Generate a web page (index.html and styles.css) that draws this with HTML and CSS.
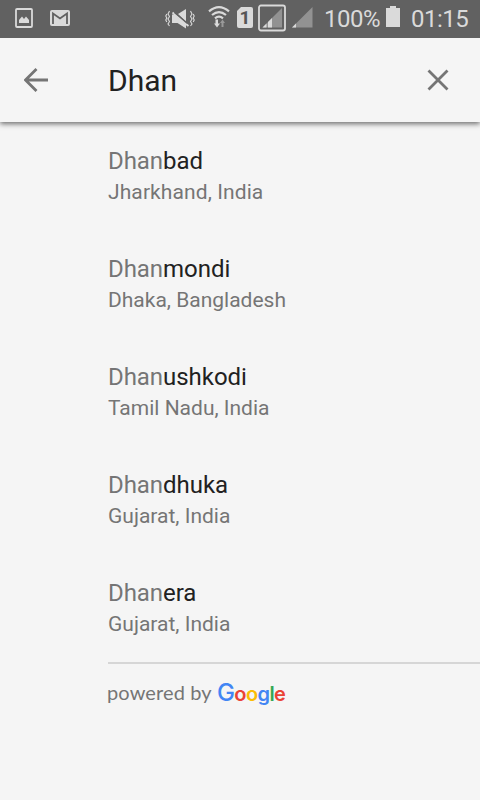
FILE: index.html
```html
<!DOCTYPE html>
<html lang="en">
<head>
<meta charset="utf-8">
<title>Place search</title>
<link rel="stylesheet" href="styles.css">
</head>
<body>
<header class="status">
  <svg class="picture" width="18" height="20" viewBox="0 0 18 20"><rect x="1" y="1" width="16" height="18" rx="1" fill="none" stroke="currentColor" stroke-width="1.800"/><path d="M4 15v-3l3-3.500 2 2.500 2-2.500 3 3.500v3z" fill="currentColor"/></svg>
  <svg class="mail" width="20" height="16" viewBox="0 0 20 16"><rect width="20" height="16" rx="2" fill="currentColor"/><path d="M3 14V3.500l7 5 7-5V14" fill="none" stroke="#616161" stroke-width="1.800"/></svg>
  <svg class="mute" width="30" height="22" viewBox="0 0 30 22"><path d="M4.500 3l-1.500 3 1.500 2.500-1.500 2.500 1.500 2.500-1.500 2.500 1.500 2M1.800 6l-1 2 1 2-1 2 1 2M25.500 3l1.500 3-1.500 2.500 1.500 2.500-1.500 2.500 1.500 2.500-1.500 2M28.200 6l1 2-1 2 1 2-1 2" fill="none" stroke="currentColor" stroke-width="1.100"/><path d="M13 6l8-5v12.500z" fill="currentColor"/><path d="M7 6.500h2.500l11.500 9.500v4.500L12.500 15H7z" fill="currentColor"/><path d="M7.500 4.500l16 13.500" stroke="currentColor" stroke-width="1.800"/><path d="M9.500 4.500l13 11" stroke="#616161" stroke-width="1.300"/></svg>
  <svg class="wifi" width="22" height="24" viewBox="0 0 22 24"><path d="M1 6.300Q11-2.200 21 6.300M4 10Q11 4.200 18 10M7 13.300Q11 10 15 13.300" fill="none" stroke="currentColor" stroke-width="2.200"/><path d="M7.500 14.500h2.500v4H12l-3 4-3-4h1.500z" fill="currentColor"/><path d="M13.500 22v-4H12l2.500-3.500 2.500 3.500h-1.500v4z" fill="#999"/></svg>
  <span class="sim">1</span>
  <svg class="signal" width="28" height="28" viewBox="0 0 28 28"><rect x="1" y="1.500" width="26" height="25" rx="2" fill="none" stroke="currentColor" stroke-width="1.800"/><path d="M4.500 23.500L24 4v19.500z" fill="#929292"/><path d="M4.500 23.500L8.500 19.500v4zM10 23.500v-5.500l4-4v9.500z" fill="currentColor"/></svg>
  <svg class="signal2" width="21" height="21" viewBox="0 0 21 21"><path d="M0 20.500L20.500 0v20.500z" fill="#929292"/><path d="M0 20.500l4-4v4z" fill="currentColor"/></svg>
  <span class="percent">100%</span>
  <svg class="battery" width="14" height="21" viewBox="0 0 14 21"><path d="M4 0h6v2h4v19H0V2h4z" fill="currentColor"/></svg>
  <span class="clock">01:15</span>
</header>
<div class="search">
  <svg class="back" width="24" height="24" viewBox="0 0 24 24"><path d="M24 12H2M12.500 1L1.500 12l11 11" fill="none" stroke="currentColor" stroke-width="2.800"/></svg>
  <span class="query">Dhan</span>
  <svg class="clear" width="22" height="22" viewBox="0 0 22 22"><path d="M1.500 1.500l19 19M20.500 1.500l-19 19" stroke="currentColor" stroke-width="2.800"/></svg>
</div>
<main class="results">
  <div class="place"><div class="name">Dhan<b>bad</b></div><div class="region wide">Jharkhand, India</div></div>
  <div class="place"><div class="name">Dhan<b>mondi</b></div><div class="region">Dhaka, Bangladesh</div></div>
  <div class="place"><div class="name">Dhan<b>ushkodi</b></div><div class="region">Tamil Nadu, India</div></div>
  <div class="place"><div class="name">Dhan<b>dhuka</b></div><div class="region">Gujarat, India</div></div>
  <div class="place"><div class="name">Dhan<b>era</b></div><div class="region">Gujarat, India</div></div>
</main>
<footer class="credit"><span class="powered">powered by</span><span class="google"><i class="blue cap">G</i><i class="red">o</i><i class="yellow">o</i><i class="blue">g</i><i class="green">l</i><i class="red">e</i></span></footer>
</body>
</html>
```
FILE: styles.css
```css
* { box-sizing: border-box; }
body { margin: 0; height: 800px; overflow: hidden; background: #f5f5f5; font-family: Roboto, sans-serif; color: #212121; }
svg { display: block; flex: none; }
.status { height: 38px; display: flex; align-items: flex-start; background: #616161; color: #dadada; white-space: nowrap; }
.picture { margin: 8px 0 0 15px; }
.mail { margin: 10px 0 0 17px; }
.mute { margin: 8px 0 0 95px; }
.wifi { margin: 5px 0 0 13px; }
.sim { width: 16px; height: 21px; margin: 7px 0 0 7px; border-radius: 2px; background: #dadada; color: #555; font-weight: 700; font-size: 19px; line-height: 22px; text-align: center; clip-path: polygon(4px 0, 100% 0, 100% 100%, 0 100%, 0 4px); }
.signal { margin: 4px 0 0 5px; }
.signal2 { margin: 7px 0 0 6px; }
.percent { width: 57px; margin: 5px 0 0 11px; font-size: 24px; line-height: 28px; letter-spacing: -.5px; }
.battery { margin: 6px 0 0 5px; }
.clock { margin: 5px 0 0 11px; font-size: 24px; line-height: 28px; letter-spacing: -.5px; }
.search { height: 84px; display: flex; align-items: center; padding: 0 31px 0 24px; background: #f5f5f5; color: #757575; box-shadow: 0 2px 5px rgba(0,0,0,.55); clip-path: inset(0 0 -10px 0); }
.query { flex: 1; margin: 2px 0 0 60px; font-size: 30px; line-height: 36px; color: #212121; }
.results { margin-left: 108px; padding-top: 23px; height: 540px; }
.place { height: 108px; color: #757575; }
.name { height: 32px; font-size: 24px; line-height: 32px; letter-spacing: -.05px; }
.name b { font-weight: 400; color: #212121; }
.region { font-size: 21px; line-height: 30px; }
.wide { letter-spacing: .1px; }
.credit { display: flex; margin-left: 108px; height: 60px; border-top: 2px solid #d6d6d6; line-height: 57px; color: #757575; }
.powered { width: 109px; margin-left: -1px; padding-right: 0; font-family: Lato, sans-serif; font-size: 20px; letter-spacing: .12px; }
.google { margin-left: 1px; font-family: Inter, sans-serif; font-weight: 600; font-size: 20px; letter-spacing: -.6px; }
.google i { font-style: normal; }
.google .cap { font-size: 24px; font-weight: 500; }
.blue { color: #4285f4; }
.red { color: #ea4335; }
.yellow { color: #fbbc05; }
.green { color: #34a853; }
```
